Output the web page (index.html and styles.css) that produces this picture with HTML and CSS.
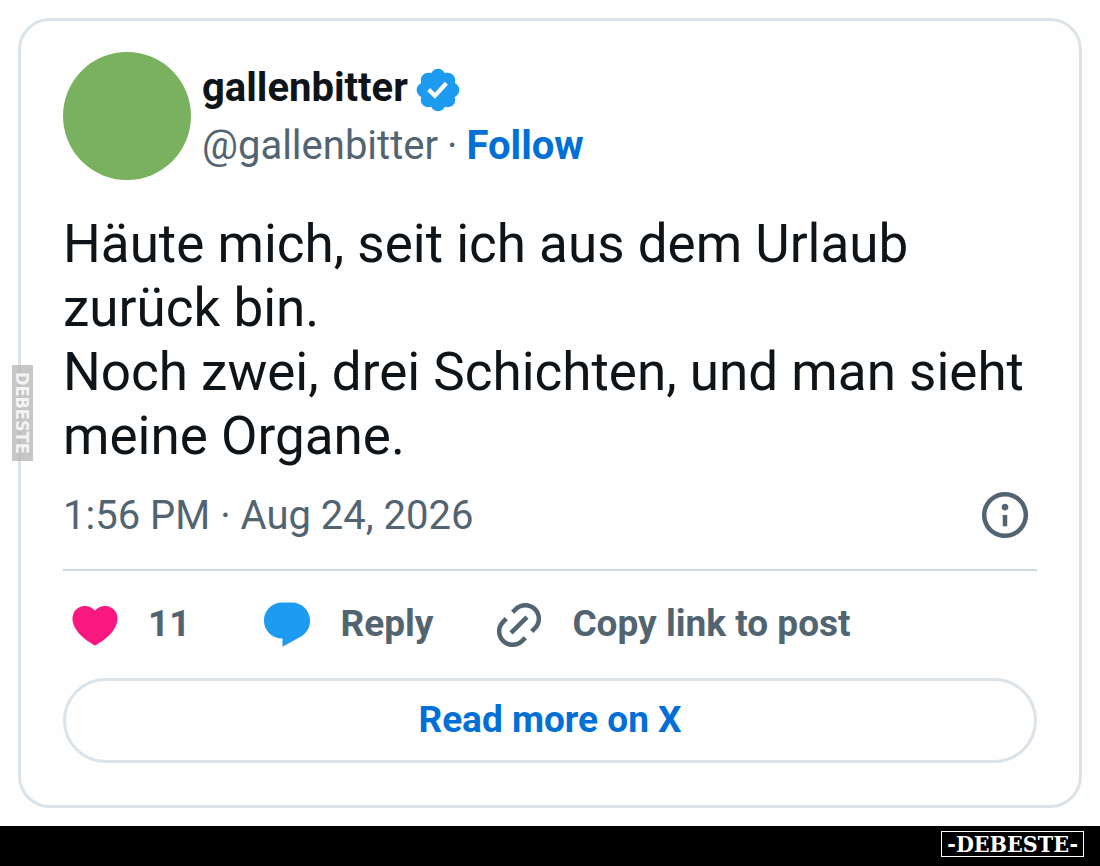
FILE: index.html
```html
<!DOCTYPE html>
<html lang="de">
<head>
  <meta charset="UTF-8" />
  <meta name="viewport" content="width=device-width, initial-scale=1.0"/>
  <title>gallenbitter - DEBESTE</title>
  <link rel="stylesheet" href="styles.css">
</head>
<body>
  <main>
    <article class="card">
      <header class="author">
        <div class="avatar"></div>
        <div class="author-info">
          <div class="name-row">
            <a class="name" href="#">gallenbitter</a>
            <svg class="verified" viewBox="0 0 24 24" role="img" aria-label="Verified">
              <path d="M22.25 12c0-1.43-.88-2.67-2.19-3.34.46-1.39.2-2.9-.81-3.91s-2.52-1.27-3.91-.81c-.66-1.31-1.91-2.19-3.34-2.19s-2.67.88-3.33 2.19c-1.4-.46-2.91-.2-3.92.81s-1.26 2.52-.8 3.91c-1.31.67-2.2 1.91-2.2 3.34s.89 2.67 2.2 3.34c-.46 1.39-.21 2.9.8 3.91s2.52 1.26 3.91.81c.67 1.31 1.91 2.19 3.34 2.19s2.68-.88 3.34-2.19c1.39.45 2.9.2 3.91-.81s1.27-2.52.81-3.91c1.31-.67 2.19-1.91 2.19-3.34zm-11.71 4.2L6.8 12.46l1.41-1.42 2.26 2.26 4.8-5.23 1.47 1.36-6.2 6.77z"/>
            </svg>
          </div>
          <div class="handle-row">
            <a class="handle" href="#">@gallenbitter</a>
            <span>·</span>
            <a class="follow" href="#">Follow</a>
          </div>
        </div>
      </header>

      <p class="text">Häute mich, seit ich aus dem Urlaub zurück bin.<br>Noch zwei, drei Schichten, und man sieht meine Organe.</p>

      <div class="meta">
        <time datetime="2026-08-24T13:56">1:56 PM · Aug 24, 2026</time>
        <a class="info" href="#" aria-label="Info">
          <svg class="icon" viewBox="0 0 24 24">
            <path d="M13.5 8.5c0 .83-.67 1.5-1.5 1.5s-1.5-.67-1.5-1.5S11.17 7 12 7s1.5.67 1.5 1.5zM13 17v-5h-2v5h2zm-1 5.25c5.66 0 10.25-4.59 10.25-10.25S17.66 1.75 12 1.75 1.75 6.34 1.75 12 6.34 22.25 12 22.25zM20.25 12c0 4.56-3.69 8.25-8.25 8.25S3.75 16.56 3.75 12 7.44 3.75 12 3.75s8.25 3.69 8.25 8.25z"/>
          </svg>
        </a>
      </div>

      <div class="actions">
        <button class="action like" type="button" aria-label="Like, 11">
          <svg class="icon" viewBox="0 0 24 24">
            <path d="M20.884 13.19c-1.351 2.48-4.001 5.12-8.379 7.67l-.503.3-.504-.3c-4.379-2.55-7.029-5.19-8.382-7.67-1.36-2.5-1.41-4.86-.514-6.67.887-1.79 2.647-2.91 4.601-3.01 1.651-.09 3.368.56 4.798 2.01 1.429-1.45 3.146-2.1 4.796-2.01 1.954.1 3.714 1.22 4.601 3.01.896 1.81.846 4.17-.514 6.67z"/>
          </svg>
          <span>11</span>
        </button>
        <button class="action reply" type="button">
          <svg class="icon" viewBox="0 0 24 24">
            <path d="M1.751 10c0-4.42 3.584-8 8.005-8h4.366c4.49 0 8.129 3.64 8.129 8.13 0 2.96-1.607 5.68-4.196 7.11l-8.054 4.46v-3.69h-.067c-4.49.1-8.183-3.51-8.183-8.01z"/>
          </svg>
          <span>Reply</span>
        </button>
        <button class="action copy" type="button">
          <svg class="icon" viewBox="0 0 24 24">
            <path d="M18.36 5.64c-1.95-1.96-5.11-1.96-7.07 0L9.88 7.05 8.46 5.64l1.42-1.42c2.73-2.73 7.16-2.73 9.9 0 2.73 2.74 2.73 7.17 0 9.9l-1.42 1.42-1.41-1.42 1.41-1.41c1.96-1.96 1.96-5.12 0-7.07zm-2.12 3.53l-7.07 7.07-1.41-1.41 7.07-7.07 1.41 1.41zm-12.02.71l1.42-1.42 1.41 1.42-1.41 1.41c-1.96 1.96-1.96 5.12 0 7.07 1.95 1.96 5.11 1.96 7.07 0l1.41-1.41 1.42 1.41-1.42 1.42c-2.73 2.73-7.16 2.73-9.9 0-2.73-2.74-2.73-7.17 0-9.9z"/>
          </svg>
          <span>Copy link to post</span>
        </button>
      </div>

      <a class="read-more" href="#">Read more on X</a>
    </article>
    <div class="watermark">DEBESTE</div>
  </main>

  <footer class="footer">
    <div class="brand">-DEBESTE-</div>
  </footer>
</body>
</html>
```
FILE: styles.css
```css
* {
  box-sizing: border-box;
}

body {
  margin: 0;
  min-height: 100vh;
  display: flex;
  flex-direction: column;
  background: #fefefe;
  color: #0f1419;
  font-family: Roboto, "Liberation Sans", sans-serif;
}

main {
  position: relative;
  flex: 1;
  padding: 18px;
}

a {
  color: inherit;
  text-decoration: none;
}

.card {
  padding: 31px 42px 42px;
  border: 3px solid #dbe3e9;
  border-radius: 32px;
}

.author {
  display: flex;
  gap: 11px;
}

.avatar {
  width: 128px;
  height: 128px;
  border-radius: 50%;
  background: #79b15f;
}

.name-row,
.handle-row {
  display: flex;
  align-items: center;
  font-size: 40px;
}

.name-row {
  gap: 5px;
  height: 58px;
  padding-top: 12px;
}

.name {
  font-weight: 700;
}

.verified {
  width: 50px;
  height: 50px;
  margin-top: 6px;
  fill: #1d9bf0;
}

.handle-row {
  gap: 9px;
  height: 70px;
  color: #536471;
}

.follow {
  color: #006fd6;
  font-weight: 700;
}

.text {
  margin: 32px 0 20px;
  font-size: 53px;
  line-height: 64px;
}

.meta {
  display: flex;
  align-items: center;
  justify-content: space-between;
  padding: 0 5px 27px 0;
  border-bottom: 2px solid #cfd9de;
  color: #536471;
  font-size: 40px;
}

.icon {
  display: block;
  width: 54px;
  height: 54px;
  flex: none;
  fill: currentColor;
}

.actions {
  display: flex;
  gap: 59px;
  padding: 27px 5px 26px;
}

.action {
  display: flex;
  align-items: center;
  gap: 26px;
  padding: 0;
  border: none;
  background: none;
  color: #536471;
  font-family: inherit;
  font-size: 37px;
  font-weight: 700;
  cursor: pointer;
}

.action span {
  padding-bottom: 4px;
}

.like {
  padding-right: 11px;
}

.like .icon {
  fill: #f91880;
}

.reply .icon {
  fill: #1d9bf0;
}

.read-more {
  display: block;
  padding-bottom: 2px;
  border: 3px solid #dbe3e9;
  border-radius: 43px;
  color: #006fd6;
  font-size: 37px;
  font-weight: 700;
  line-height: 77px;
  text-align: center;
}

/* sits over the left card border */
.watermark {
  position: absolute;
  top: 365px;
  left: 12px;
  width: 21px;
  height: 96px;
  background: rgba(180, 180, 180, 0.75);
  color: #f4f4f4;
  font-family: "DejaVu Sans Condensed", "DejaVu Sans", sans-serif;
  font-size: 18px;
  font-weight: 700;
  line-height: 21px;
  text-align: center;
  writing-mode: vertical-rl;
}

.footer {
  display: flex;
  align-items: center;
  justify-content: flex-end;
  height: 40px;
  padding: 0 16px 4px;
  background: #000;
}

.brand {
  padding: 0 5px;
  border: 1px solid #fff;
  color: #fff;
  font-family: "DejaVu Serif Condensed", "DejaVu Serif", serif;
  font-size: 23px;
  font-weight: 700;
  line-height: 24px;
}
```
